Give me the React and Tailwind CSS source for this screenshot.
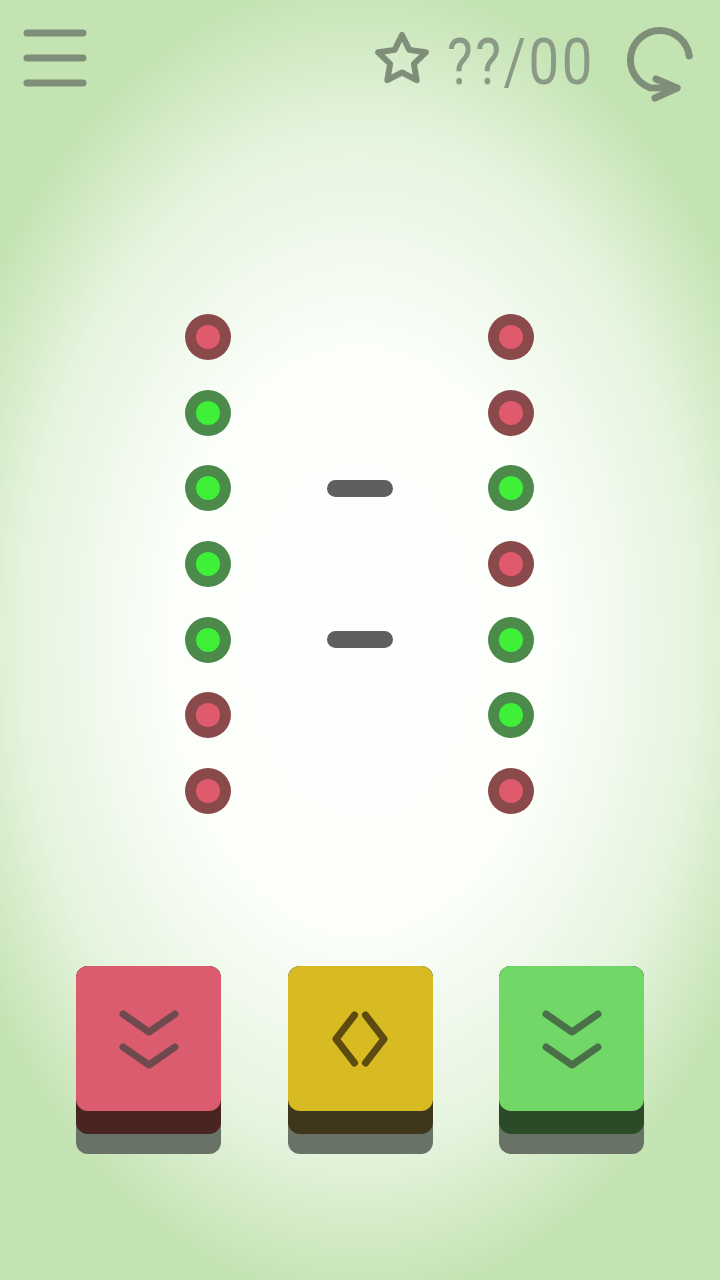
const rows = [
  ["r", "r"],
  ["g", "r"],
  ["g", "g"],
  ["g", "r"],
  ["g", "g"],
  ["r", "g"],
  ["r", "r"],
];

function Dot({ c }) {
  return c === "r" ? (
    <div className="w-[46px] h-[46px] rounded-full bg-[#8a4a4c] flex items-center justify-center">
      <div className="w-[24px] h-[24px] rounded-full bg-[#df5a6d]" />
    </div>
  ) : (
    <div className="w-[46px] h-[46px] rounded-full bg-[#4b8a4a] flex items-center justify-center">
      <div className="w-[24px] h-[24px] rounded-full bg-[#3ef038]" />
    </div>
  );
}

function Chevrons({ color }) {
  return (
    <svg width="70" height="70" viewBox="0 0 70 70" fill="none" stroke={color} strokeWidth="7" strokeLinecap="round" strokeLinejoin="round">
      <path d="M9 11 L35 29 L61 11" />
      <path d="M9 44 L35 62 L61 44" />
    </svg>
  );
}

function Diamond({ color }) {
  return (
    <svg width="70" height="70" viewBox="0 0 70 70" fill="none" stroke={color} strokeWidth="7" strokeLinecap="round" strokeLinejoin="round">
      <path d="M29.5 12 L11 36 L29.5 60" />
      <path d="M40.5 12 L59 36 L40.5 60" />
    </svg>
  );
}

function Key({ face, dark, children }) {
  return (
    <div className="w-[145px] rounded-[12px] bg-[#687266] pb-[20px]">
      <div className="rounded-[12px] pb-[23px]" style={{ backgroundColor: dark }}>
        <div className="h-[145px] rounded-[12px] flex items-center justify-center" style={{ backgroundColor: face }}>
          {children}
        </div>
      </div>
    </div>
  );
}

export default function App() {
  return (
    <div className="w-[720px] h-[1280px] overflow-hidden bg-[radial-gradient(ellipse_440px_660px_at_50%_50%,#ffffff_0%,#fbfef9_45%,#e5f4de_77%,#c4e3b3_100%)] font-['Roboto',sans-serif]">
      {/* top bar */}
      <div className="flex items-start justify-between pl-[23px] pr-[20px] pt-[24px] h-[110px]">
        <svg width="66" height="64" viewBox="0 0 66 64" className="mt-[3px]">
          <g stroke="#7f8e78" strokeWidth="7" strokeLinecap="round">
            <line x1="4" y1="6" x2="60" y2="6" />
            <line x1="4" y1="31" x2="60" y2="31" />
            <line x1="4" y1="56" x2="60" y2="56" />
          </g>
        </svg>
        <div className="flex items-start">
          <svg width="60" height="60" viewBox="0 0 60 60" className="mt-[4px] mr-[15px]">
            <path
              d="M30 7 L37.3 21.9 L53.8 24.3 L41.9 35.9 L44.7 52.2 L30 44.5 L15.3 52.2 L18.1 35.9 L6.2 24.3 L22.7 21.9 Z"
              fill="none"
              stroke="#7f8e78"
              strokeWidth="6"
              strokeLinejoin="round"
            />
          </svg>
          <div className="w-[145px] mt-[7px] mr-[32px] text-[#8b9a86] text-[64px] leading-none font-normal tracking-[3px] scale-x-[0.85] origin-left whitespace-nowrap">
            ??/00
          </div>
          <svg width="76" height="84" viewBox="0 0 76 84">
            <g fill="none" stroke="#7f8e78" strokeWidth="7" strokeLinecap="round" strokeLinejoin="round">
              <path d="M65.2 31.9 A29.5 29.5 0 1 0 25.9 63.7 L53 64" />
              <path d="M32 55 L53 64 L31 74" />
            </g>
          </svg>
        </div>
      </div>

      {/* board */}
      <div className="mt-[189px] pl-[185px] flex">
        <div className="flex flex-col">
          {rows.map((r, i) => (
            <div key={i} className="h-[75.7px] flex items-center">
              <Dot c={r[0]} />
            </div>
          ))}
        </div>
        <div className="w-[257px] flex flex-col">
          {rows.map((r, i) => (
            <div key={i} className="h-[75.7px] flex items-center justify-center">
              {(i === 2 || i === 4) && <div className="w-[66px] h-[17px] rounded-full bg-[#5f5f5f]" />}
            </div>
          ))}
        </div>
        <div className="flex flex-col">
          {rows.map((r, i) => (
            <div key={i} className="h-[75.7px] flex items-center">
              <Dot c={r[1]} />
            </div>
          ))}
        </div>
      </div>

      {/* keys */}
      <div className="mt-[137px] pl-[76px] flex gap-[66.5px]">
        <Key face="#dc5c6f" dark="#4a2421">
          <Chevrons color="#6e4a4f" />
        </Key>
        <Key face="#d8bb22" dark="#3f371b">
          <Diamond color="#5c4a0f" />
        </Key>
        <Key face="#71d868" dark="#2b4a28">
          <Chevrons color="#4a7048" />
        </Key>
      </div>
    </div>
  );
}
